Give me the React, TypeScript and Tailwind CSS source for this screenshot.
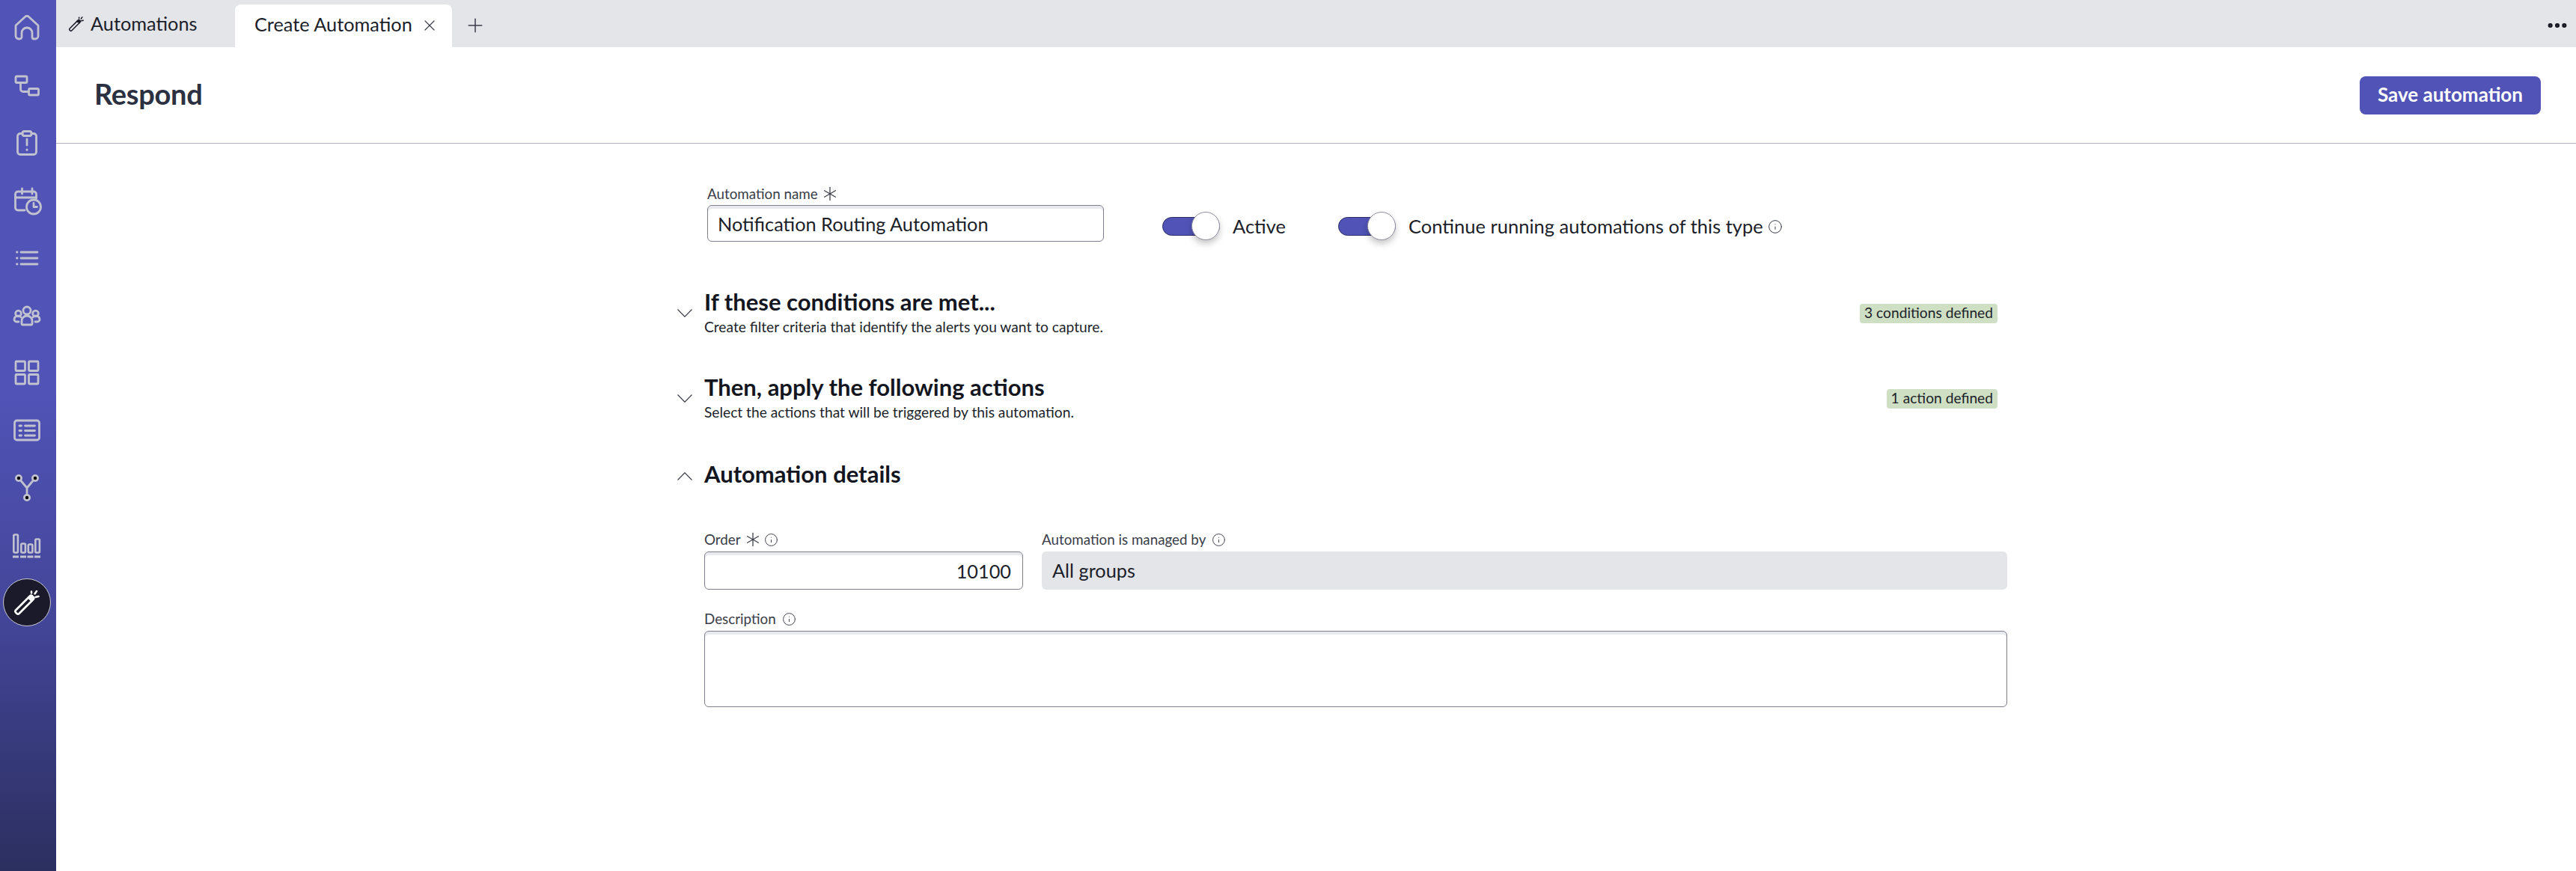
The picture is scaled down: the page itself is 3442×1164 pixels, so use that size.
import { Asterisk, Ellipsis, Info, Plus, X } from 'lucide-react';
import type { ReactNode } from 'react';

const LATO = "font-['Lato','Noto_Sans',sans-serif]";

function Wand({ className }: { className?: string }) {
  return (
    <svg viewBox="0 0 40 40" fill="none" stroke="currentColor" strokeLinecap="round" strokeLinejoin="round" className={className}>
      <path d="M5 30.5 L22 13.5 L26.5 18 L9.5 35 a2.2 2.2 0 0 1 -3 0 L5 33.5 a2.2 2.2 0 0 1 0 -3 Z" strokeWidth="2.6" />
      <path d="M22 13.5 L24.5 11 a1.5 1.5 0 0 1 2 0 L29 13.5 a1.5 1.5 0 0 1 0 2 L26.5 18" strokeWidth="2.6" fill="currentColor" />
      <path d="M26 5.5 v2 M33 5 l-2.5 3.5 M31.5 13 l4 -1" strokeWidth="2.6" />
    </svg>
  );
}

const navIcons: ReactNode[] = [
  <path key="home" d="M5 17 L17.5 5.5 a3.6 3.6 0 0 1 5 0 L35 17 V31 a4 4 0 0 1 -4 4 h-1.5 a2.5 2.5 0 0 1 -2.5 -2.5 V27 a7 7 0 0 0 -14 0 v5.5 a2.5 2.5 0 0 1 -2.5 2.5 H9 a4 4 0 0 1 -4 -4 Z" />,
  <g key="tree">
    <rect x="5" y="8" width="15" height="8.5" rx="1.5" />
    <rect x="22.5" y="24.5" width="13" height="8.5" rx="1.5" />
    <path d="M11.5 17 v8 a3.5 3.5 0 0 0 3.5 3.5 h7" />
  </g>,
  <g key="clip">
    <path d="M14 7.5 H11 a3.5 3.5 0 0 0 -3.5 3.5 v21 a3.5 3.5 0 0 0 3.5 3.5 h18 a3.5 3.5 0 0 0 3.5 -3.5 V11 a3.5 3.5 0 0 0 -3.5 -3.5 h-3" />
    <rect x="14" y="4.5" width="12" height="6" rx="2.5" />
    <path d="M20 15 v8 M20 29 v.5" />
  </g>,
  <g key="cal">
    <path d="M17 33 H8 a3.5 3.5 0 0 1 -3.5 -3.5 V11.5 a3.5 3.5 0 0 1 3.5 -3.5 h21 a3.5 3.5 0 0 1 3.5 3.5 V17" />
    <path d="M4.5 16 h28 M13.5 4 v7 M27 4 v7" />
    <circle cx="29" cy="28.5" r="9.5" />
    <path d="M29 23.5 v5 h4.5" />
  </g>,
  <path key="list" d="M12 12 h22 M12 20 h22 M12 28 h22 M6.5 12 h.5 M6.5 20 h.5 M6.5 28 h.5" />,
  <g key="group">
    <circle cx="20" cy="14" r="5" />
    <circle cx="8.5" cy="18" r="3.8" />
    <circle cx="31.5" cy="18" r="3.8" />
    <path d="M13 32 V28 a7 7 0 0 1 14 0 v3.5 a1.5 1.5 0 0 1 -1.5 1.5 h-11 a1.5 1.5 0 0 1 -1.5 -1.5 Z" />
    <path d="M9 29 H6 a3 3 0 0 1 -3 -3 a5 5 0 0 1 9 -3 M31 29 h3 a3 3 0 0 0 3 -3 a5 5 0 0 0 -9 -3" />
  </g>,
  <g key="grid">
    <rect x="5" y="5" width="12.5" height="12.5" rx="1" />
    <rect x="22.5" y="5" width="12.5" height="12.5" rx="1" />
    <rect x="5" y="22.5" width="12.5" height="12.5" rx="1" />
    <rect x="22.5" y="22.5" width="12.5" height="12.5" rx="1" />
  </g>,
  <g key="form">
    <rect x="3.5" y="7" width="33" height="26" rx="3" />
    <path d="M10 14 h2.5 M10 20.5 h2.5 M10 27 h2.5 M17.5 14 h13 M17.5 20.5 h13 M17.5 27 h13" />
  </g>,
  <g key="branch">
    <path d="M9 7 L20 20 L31 7 M20 20 V33" />
    <circle cx="9" cy="7" r="3.6" fill="currentColor" />
    <circle cx="31" cy="7" r="3.6" fill="currentColor" />
    <circle cx="20" cy="33" r="3.6" fill="currentColor" />
  </g>,
  <g key="chart" strokeWidth="2.6">
    <rect x="2.3" y="5.5" width="5.6" height="24" rx="1.5" />
    <rect x="12.3" y="17.5" width="5.6" height="12" rx="1.5" />
    <rect x="21.8" y="18.5" width="5.6" height="11" rx="1.5" />
    <rect x="31.3" y="11.5" width="5.6" height="18" rx="1.5" />
    <path d="M1 35 h8 M11 35 h8 M20.5 35 h8 M30 35 h8" strokeWidth="3" strokeLinecap="butt" />
  </g>,
];

function Sidebar() {
  return (
    <aside className="flex w-[75px] shrink-0 flex-col bg-[linear-gradient(to_bottom,#5153b7_0%,#5153b7_45%,#44469a_70%,#2b2f5f_100%)] pr-[3px]">
      <div className="-mt-px flex w-full flex-col items-center">
        {navIcons.map((icon, i) => (
          <button key={i} className="flex h-[76.8px] w-full items-center justify-center">
            <svg viewBox="0 0 40 40" fill="none" stroke="#c1c2cf" strokeWidth="2.8" strokeLinecap="round" strokeLinejoin="round" className="h-10 w-10">
              {icon}
            </svg>
          </button>
        ))}
        <button className="mt-[6px] flex h-[64px] w-[64px] items-center justify-center rounded-full border border-[#c9cad2] bg-[#1a1a2a] text-white">
          <Wand className="h-10 w-10" />
        </button>
      </div>
    </aside>
  );
}

function TabBar() {
  return (
    <div className="flex h-[63px] shrink-0 items-end bg-[#e4e5e9] text-[25.3px] text-[#1c1f2a]">
      <div className="flex h-[63px] w-[239px] items-center pl-[15px]">
        <Wand className="mr-[7px] h-[24px] w-[24px]" />
        <span>Automations</span>
      </div>
      <div className="flex h-[57px] w-[290px] items-center rounded-t-[8px] bg-white pb-[3px] pl-[26px]">
        <span>Create Automation</span>
        <X className="ml-[11px] mt-[2px] h-[24px] w-[24px] text-[#3a3d48]" strokeWidth={1.2} />
      </div>
      <div className="flex h-[63px] items-center pl-[16px] pt-[4px]">
        <Plus className="h-[30px] w-[30px] text-[#3a3d48]" strokeWidth={1.2} />
      </div>
      <div className="ml-auto flex h-[63px] items-center pr-[9px] pt-[4px]">
        <Ellipsis className="h-[32px] w-[32px] text-[#14161f]" strokeWidth={2.6} />
      </div>
    </div>
  );
}

function Toggle({ label, info }: { label: string; info?: boolean }) {
  return (
    <div className="flex h-[38px] items-center">
      <div className="relative h-[38px] w-[77px]">
        <div className="absolute left-0 right-0 top-[7px] h-[25px] rounded-full border border-[#2c2f66] bg-[#5153b7]" />
        <div className="absolute right-0 top-0 h-[38px] w-[38px] rounded-full border border-[#8d8f9e] bg-white shadow-[0_5px_8px_rgba(0,0,0,0.22)]" />
      </div>
      <span className="ml-[17px] text-[25.5px] leading-[38px] text-[#1c1f2a]">{label}</span>
      {info && <Info className="ml-[6px] mt-[2px] h-[20px] w-[20px] text-[#3a3d48]" strokeWidth={1.2} />}
    </div>
  );
}

function Chevron({ up }: { up?: boolean }) {
  return (
    <svg viewBox="0 0 20 11" fill="none" stroke="#3a3d48" strokeWidth="1.2" className="h-[11px] w-[20px]">
      <path d={up ? 'M0.5 10.5 L10 0.8 L19.5 10.5' : 'M0.5 0.5 L10 10.2 L19.5 0.5'} />
    </svg>
  );
}

function Section({ title, sub, badge, up }: { title: string; sub?: string; badge?: string; up?: boolean }) {
  return (
    <div className="flex items-center">
      <div className={`w-[36px] shrink-0 ${up ? 'pt-[6px]' : 'pt-[4px]'}`}>
        <Chevron up={up} />
      </div>
      <div className="flex-1">
        <div className="text-[31px] font-bold leading-[36px] text-[#14161f]">{title}</div>
        {sub && <div className="mt-[5px] text-[19.2px] leading-[22px] text-[#1c1f2a]">{sub}</div>}
      </div>
      {badge && (
        <span className="mr-[13px] mt-[4px] flex h-[26px] items-center rounded-[4px] bg-[#cfdfc4] px-[6px] text-[19.2px] text-[#1c1f2a]">{badge}</span>
      )}
    </div>
  );
}

function FieldLabel({ text, req, info }: { text: string; req?: boolean; info?: boolean }) {
  return (
    <div className="mb-[5px] flex h-[22px] items-center text-[18.8px] text-[#3a3d48]">
      <span>{text}</span>
      {req && <Asterisk className="-my-[6px] ml-[-1px] mr-[-10px] h-[34px] w-[34px] text-[#3a3d48]" strokeWidth={0.9} />}
      {info && <Info className="ml-[8px] h-[19px] w-[19px] text-[#3a3d48]" strokeWidth={1.2} />}
    </div>
  );
}

const inputClass =
  'w-full rounded-[6px] border border-[#7d7f8c] bg-white shadow-[inset_0_4px_0_#e9eaee] text-[25.3px] text-[#1c1f2a] outline-none';

export default function App() {
  return (
    <div className={`flex h-screen w-full overflow-hidden bg-white ${LATO}`}>
      <Sidebar />
      <main className="flex min-w-0 flex-1 flex-col">
        <TabBar />
        <header className="flex h-[129px] shrink-0 items-center justify-between border-b border-[#b0b1bf] pl-[51px] pr-[47px]">
          <h1 className="pb-[3px] text-[38px] font-bold tracking-[-0.3px] text-[#2c3142]">Respond</h1>
          <button className="flex h-[51px] w-[242px] items-center justify-center rounded-[8px] bg-[#5153b7] pb-[2px] text-[26px] font-bold text-white">
            Save automation
          </button>
        </header>
        <div className="ml-[830px] w-[1777px] pt-[56px]">
          <div className="flex pl-[40px]">
            <div className="w-[530px]">
              <div className="-mb-px">
                <FieldLabel text="Automation name" req />
              </div>
              <input readOnly value="Notification Routing Automation" className={`${inputClass} h-[49px] pl-[13px]`} />
            </div>
            <div className="ml-[78px] flex gap-[70px] pt-[35px]">
              <Toggle label="Active" />
              <Toggle label="Continue running automations of this type" info />
            </div>
          </div>
          <div className="mt-[62px] flex flex-col">
            <Section title="If these conditions are met..." sub="Create filter criteria that identify the alerts you want to capture." badge="3 conditions defined" />
            <div className="mt-[51px]">
              <Section title="Then, apply the following actions" sub="Select the actions that will be triggered by this automation." badge="1 action defined" />
            </div>
            <div className="mt-[53px]">
              <Section title="Automation details" up />
            </div>
          </div>
          <div className="mt-[59px] pl-[36px]">
            <div className="flex gap-[25px]">
              <div className="w-[426px] shrink-0">
                <FieldLabel text="Order" req info />
                <input readOnly value="10100" className={`${inputClass} h-[51px] pr-[15px] text-right`} />
              </div>
              <div className="flex-1">
                <FieldLabel text="Automation is managed by" info />
                <div className="flex h-[51px] items-center rounded-[6px] bg-[#e4e5e9] pl-[14px] text-[25.3px] text-[#1c1f2a]">All groups</div>
              </div>
            </div>
            <div className="mt-[28px]">
              <FieldLabel text="Description" info />
              <textarea readOnly className={`${inputClass} block h-[102px] resize-none`} />
            </div>
          </div>
        </div>
      </main>
    </div>
  );
}
